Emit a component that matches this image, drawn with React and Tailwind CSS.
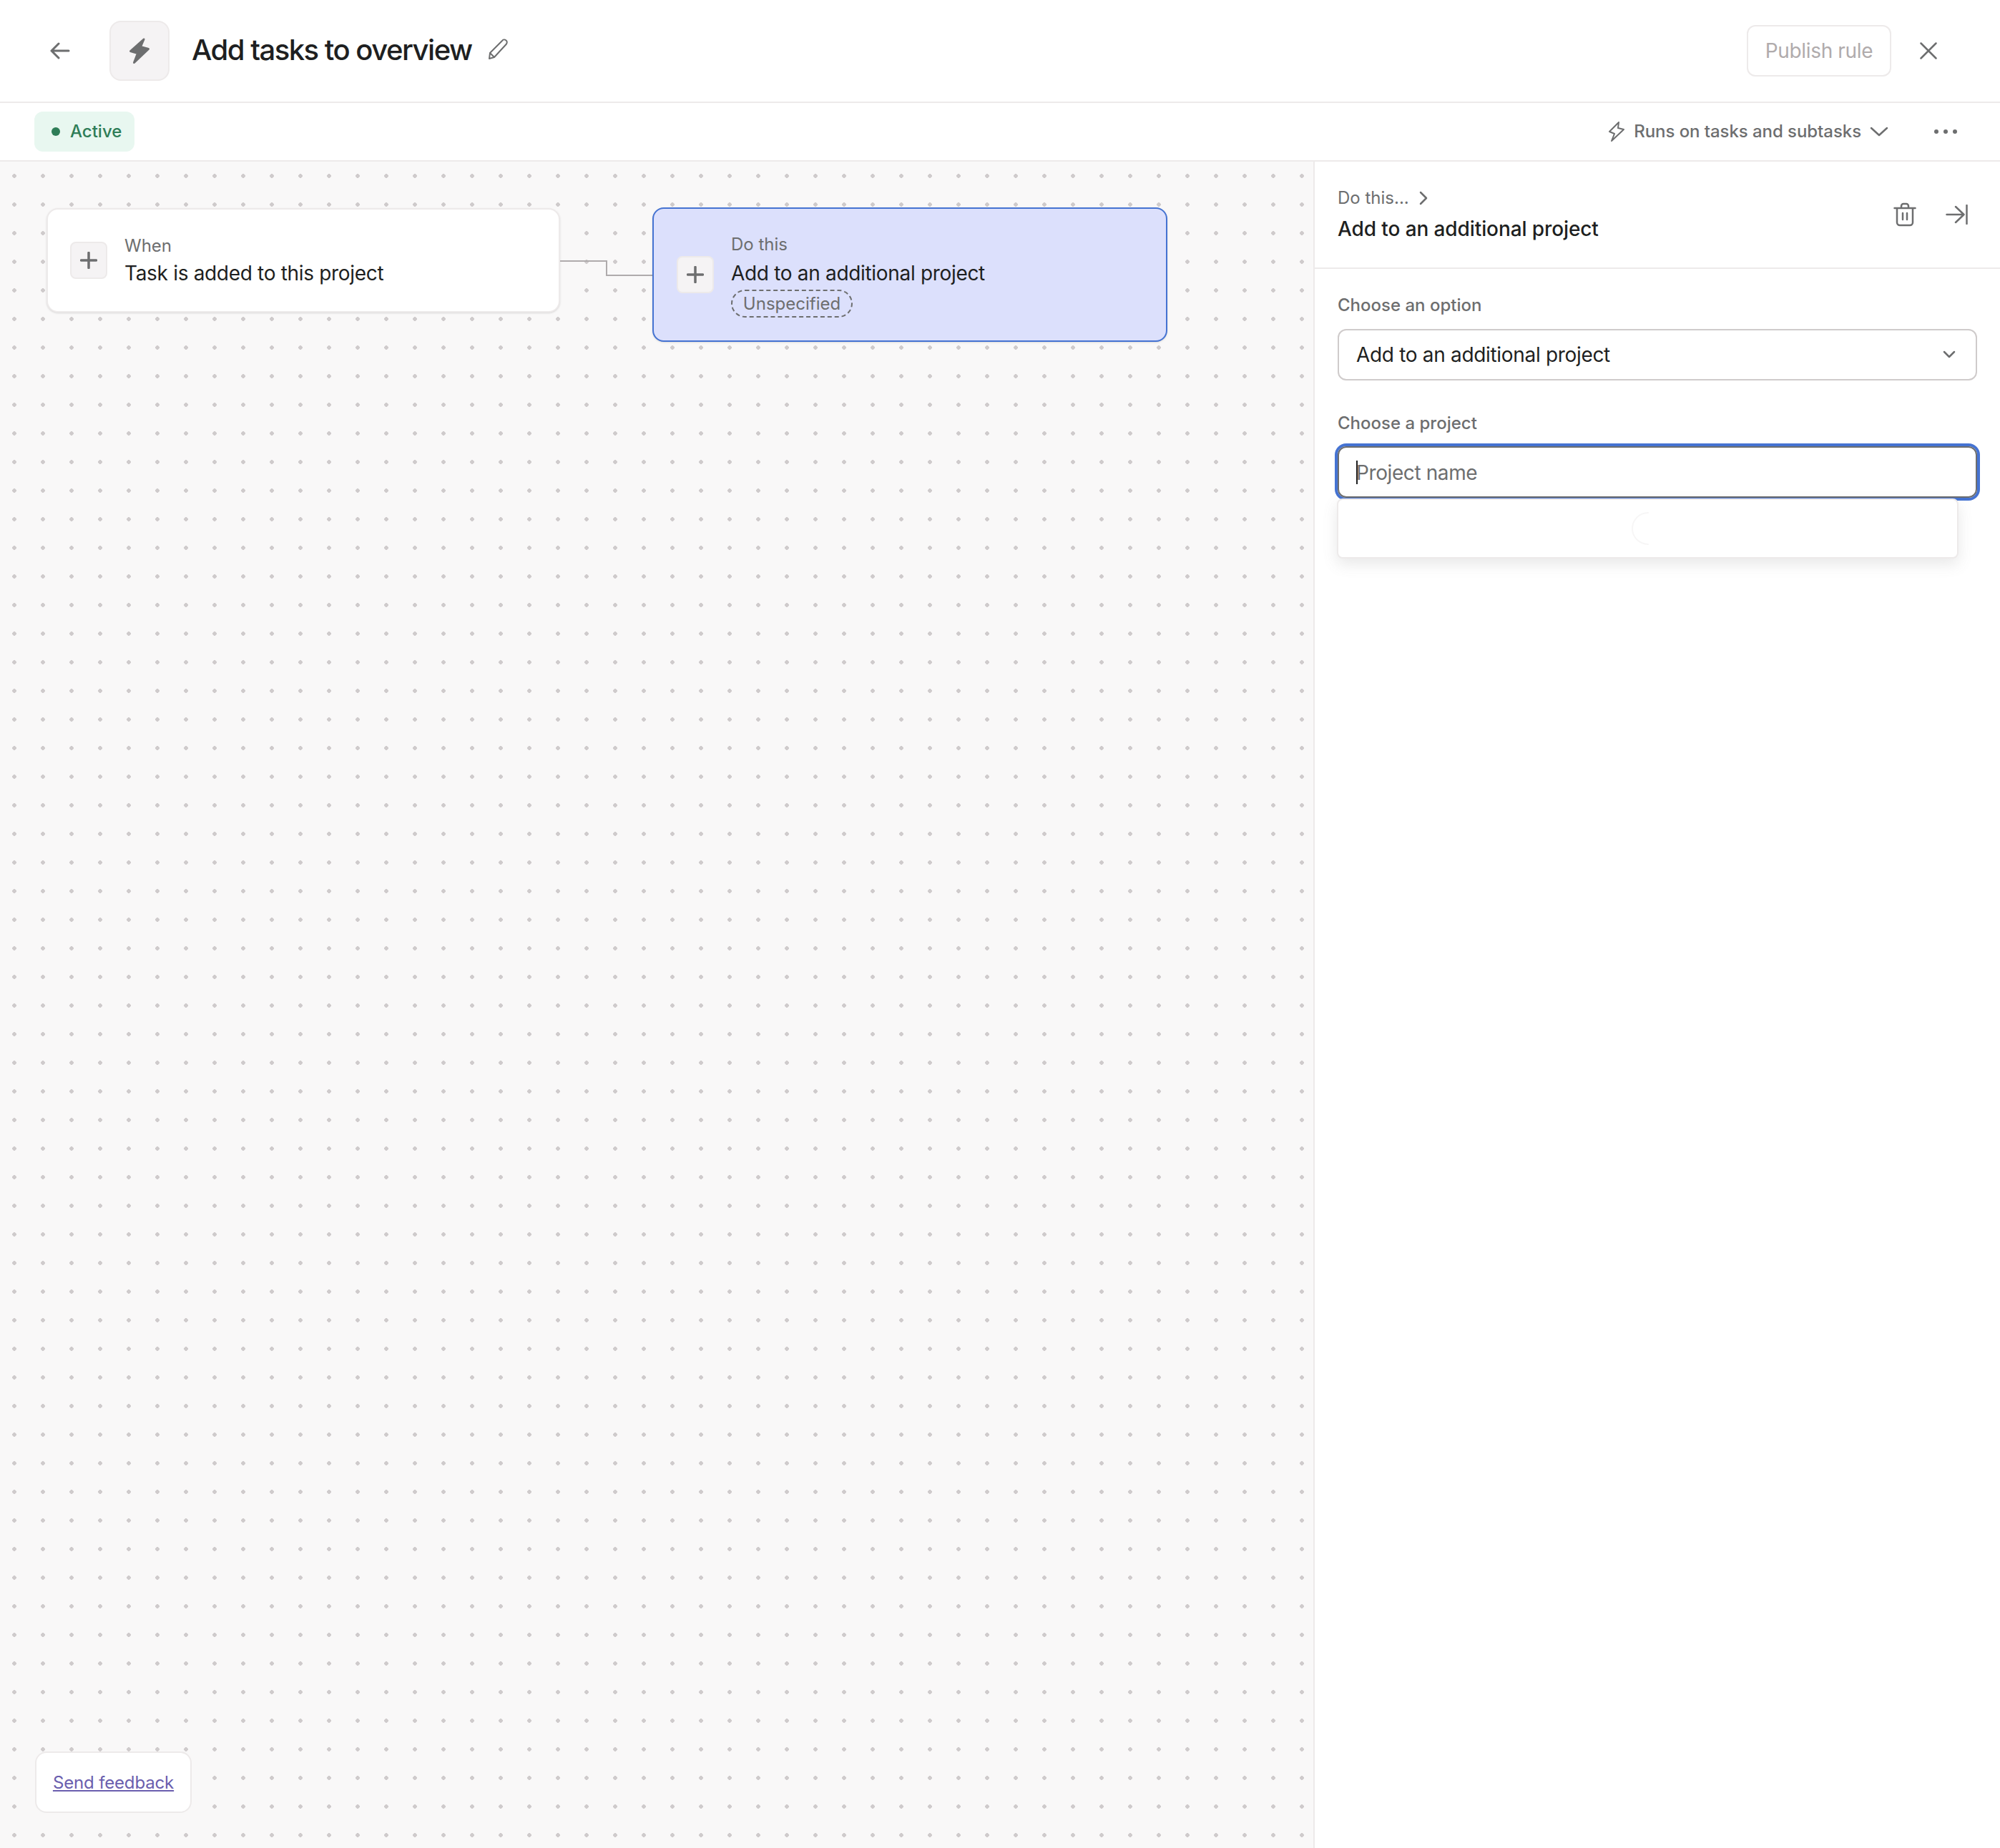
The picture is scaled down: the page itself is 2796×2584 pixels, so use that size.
const Plus = () => (
  <svg width="24" height="24" viewBox="0 0 24 24" fill="none" stroke="#6d6e6f" strokeWidth="3.5" strokeLinecap="round">
    <path d="M12 1.500v21M1.500 12h21" />
  </svg>
);

function NodeCard({ label, title, selected, children }) {
  return (
    <div
      className={
        selected
          ? "flex items-center w-[720px] h-[188px] pl-[32px] rounded-2xl bg-[#dce0fc] border-2 border-[#4573d2] shadow-sm"
          : "flex items-center w-[718px] h-[146px] -ml-[1px] pl-[31px] rounded-2xl bg-white border-2 border-[#edeaea] shadow-sm"
      }
    >
      <div className="flex items-center justify-center w-[52px] h-[52px] rounded-lg bg-[#f5f3f4] border-2 border-[#edeaea]">
        <Plus />
      </div>
      <div className="ml-[24px]">
        <div className="text-[24px] leading-[36px] text-[#6d6e6f]">{label}</div>
        <div className={selected ? "text-[28px] leading-[44px] tracking-[-0.32px] text-[#1e1f21]" : "text-[28px] leading-[41px] tracking-[-0.32px] text-[#1e1f21]"}>{title}</div>
        {children}
      </div>
    </div>
  );
}

export default function App() {
  return (
    <div className="flex flex-col w-[2796px] h-[2584px] bg-white font-['Inter',sans-serif] text-[#1e1f21] overflow-hidden">
      <header className="flex items-center h-[144px] shrink-0 border-b-2 border-[#edeaea]">
        <svg className="ml-[70px]" width="28" height="24" viewBox="0 0 28 24" fill="none" stroke="#6d6e6f" strokeWidth="3" strokeLinecap="round" strokeLinejoin="round">
          <path d="M26 12H2M12 2 2 12l10 10" />
        </svg>
        <div className="flex items-center justify-center ml-[55px] w-[84px] h-[84px] rounded-2xl bg-[#f5f3f4] border-2 border-[#edeaea]">
          <svg width="30" height="38" viewBox="0 0 30 38" fill="#6d6e6f" stroke="#6d6e6f" strokeWidth="3" strokeLinejoin="round">
            <path d="M21 3 2.500 19.500l10 3-5 13 20-19-11-3z" />
          </svg>
        </div>
        <h1 className="ml-[31px] -mt-[2px] text-[40px] font-medium leading-none tracking-[-1.5px]">Add tasks to overview</h1>
        <svg className="ml-[22px] -mt-[4px]" width="30" height="30" viewBox="0 0 30 30" fill="none" stroke="#6d6e6f" strokeWidth="2" strokeLinejoin="round">
          <path d="M3 20 20 3a3.500 3.500 0 0 1 6 4.500L9 26l-7 2zM3 20l6 6" />
        </svg>
        <button className="ml-auto w-[202px] h-[72px] rounded-xl border-2 border-[#edeaea] text-[28px] tracking-[-0.35px] text-[#b0abac]">Publish rule</button>
        <svg className="ml-[40px] mr-[88px]" width="24" height="24" viewBox="0 0 24 24" fill="none" stroke="#6d6e6f" strokeWidth="2.500" strokeLinecap="round">
          <path d="M1.500 1.500l21 21M22.500 1.500l-21 21" />
        </svg>
      </header>

      <div className="flex items-center h-[82px] shrink-0 pl-[48px] border-b-2 border-[#edeaea]">
        <div className="flex items-center w-[140px] h-[56px] pl-[24px] rounded-xl bg-[#e8f7f0] text-[24px] font-medium text-[#2e7d57]">
          <span className="w-[12px] h-[12px] rounded-full bg-[#2e7d57]"></span>
          <span className="ml-[14px]">Active</span>
        </div>
        <div className="flex items-center ml-auto text-[24px] font-medium tracking-[-0.06px] text-[#6d6e6f]">
          <svg width="24" height="30" viewBox="0 0 24 30" fill="none" stroke="#6d6e6f" strokeWidth="2" strokeLinejoin="round">
            <path d="M15 2 2 15l7 3-4 10L22 12l-8-2z" />
          </svg>
          <span className="ml-[12px]">Runs on tasks and subtasks</span>
          <svg className="ml-[12px]" width="26" height="14" viewBox="0 0 26 14" fill="none" stroke="#6d6e6f" strokeWidth="2.500" strokeLinecap="round" strokeLinejoin="round">
            <path d="M2 2l11 10L24 2" />
          </svg>
        </div>
        <div className="flex items-center gap-[7px] ml-[64px] mr-[60px]">
          <span className="w-[6px] h-[6px] rounded-full bg-[#6d6e6f]"></span>
          <span className="w-[6px] h-[6px] rounded-full bg-[#6d6e6f]"></span>
          <span className="w-[6px] h-[6px] rounded-full bg-[#6d6e6f]"></span>
        </div>
      </div>

      <div className="flex flex-1 min-h-0">
        <main className="relative flex items-start w-[1836px] shrink-0 pt-[64px] pl-[66px] bg-[#f9f8f8] bg-[radial-gradient(circle,#cfcbcc_2.600px,transparent_3px)] bg-[size:40px_40px]">
          <div className="mt-[1px]">
            <NodeCard label="When" title="Task is added to this project" />
          </div>
          <svg className="mt-[73px] shrink-0" width="129" height="24" viewBox="0 0 129 24" fill="none" stroke="#afabac" strokeWidth="2">
            <path d="M0 2h65v20h64" />
          </svg>
          <NodeCard label="Do this" title="Add to an additional project" selected>
            <div className="flex items-center justify-center w-[170px] h-[39px] mt-[1px] rounded-full border-2 border-dashed border-[#6d6e6f] text-[24px] text-[#6d6e6f]">
              Unspecified
            </div>
          </NodeCard>
          <div className="absolute left-[49px] bottom-[49px] flex items-center justify-center w-[219px] h-[86px] pt-[2px] rounded-2xl bg-white border-2 border-[#edeaea]">
            <a href="#" className="text-[24px] tracking-[-0.15px] text-[#6a5eae] underline">Send feedback</a>
          </div>
        </main>

        <aside className="flex flex-col flex-1 border-l-2 border-[#edeaea] bg-white">
          <div className="flex items-center h-[150px] shrink-0 pl-[32px] border-b-2 border-[#edeaea]">
            <div>
              <div className="flex items-center h-[36px] text-[24px] text-[#6d6e6f]">
                Do this...
                <svg className="ml-[14px]" width="12" height="20" viewBox="0 0 12 20" fill="none" stroke="#6d6e6f" strokeWidth="2.500" strokeLinecap="round" strokeLinejoin="round">
                  <path d="M2 2l8 8-8 8" />
                </svg>
              </div>
              <div className="mt-[3px] text-[28px] leading-[44px] font-medium tracking-[-0.1px]">Add to an additional project</div>
            </div>
            <svg className="ml-auto" width="32" height="34" viewBox="0 0 32 34" fill="none" stroke="#6d6e6f" strokeWidth="2.500" strokeLinecap="round" strokeLinejoin="round">
              <path d="M1.500 8h29M5 8v20a4 4 0 0 0 4 4h14a4 4 0 0 0 4-4V8M11 8V5a3 3 0 0 1 3-3h4a3 3 0 0 1 3 3v3M13 15v9M19 15v9" />
            </svg>
            <svg className="ml-[41px] mr-[44px]" width="32" height="28" viewBox="0 0 32 28" fill="none" stroke="#6d6e6f" strokeWidth="2.500" strokeLinecap="round" strokeLinejoin="round">
              <path d="M1.500 14h24M14 3l11.500 11L14 25M29.500 1v26" />
            </svg>
          </div>

          <div className="pt-[33px] px-[32px]">
            <label className="block text-[24px] leading-[36px] font-medium text-[#6d6e6f]">Choose an option</label>
            <div className="flex items-center justify-between h-[72px] mt-[15px] pl-[24px] pr-[28px] rounded-xl border-2 border-[#cfcbcb] text-[28px] tracking-[-0.32px]">
              Add to an additional project
              <svg width="18" height="12" viewBox="0 0 18 12" fill="none" stroke="#6d6e6f" strokeWidth="2.500" strokeLinecap="round" strokeLinejoin="round">
                <path d="M2 2l7 7 7-7" />
              </svg>
            </div>

            <label className="block mt-[42px] text-[24px] leading-[36px] font-medium text-[#6d6e6f]">Choose a project</label>
            <div className="relative mt-[14px]">
              <div className="flex items-center h-[72px] pl-[24px] pt-[1px] rounded-xl border-2 border-[#6d6e6f] shadow-[0_0_0_4px_#4573d2] text-[28px] tracking-[-0.4px] text-[#6d6e6f]">
                <span className="w-[2px] h-[33px] -mr-[2px] bg-[#1e1f21]"></span>
                Project name
              </div>
              <div className="absolute left-[-1px] top-[73px] flex items-center justify-center w-[869px] h-[84px] rounded-lg bg-white border-2 border-[#edeaea] shadow-[0_8px_20px_rgba(109,110,111,0.16)]">
                <svg width="46" height="46" viewBox="0 0 46 46" fill="none" stroke="#f7f6f6" strokeWidth="2" strokeLinecap="round">
                  <path d="M23 1A22 22 0 0 0 23 45" />
                </svg>
              </div>
            </div>
          </div>
        </aside>
      </div>
    </div>
  );
}
